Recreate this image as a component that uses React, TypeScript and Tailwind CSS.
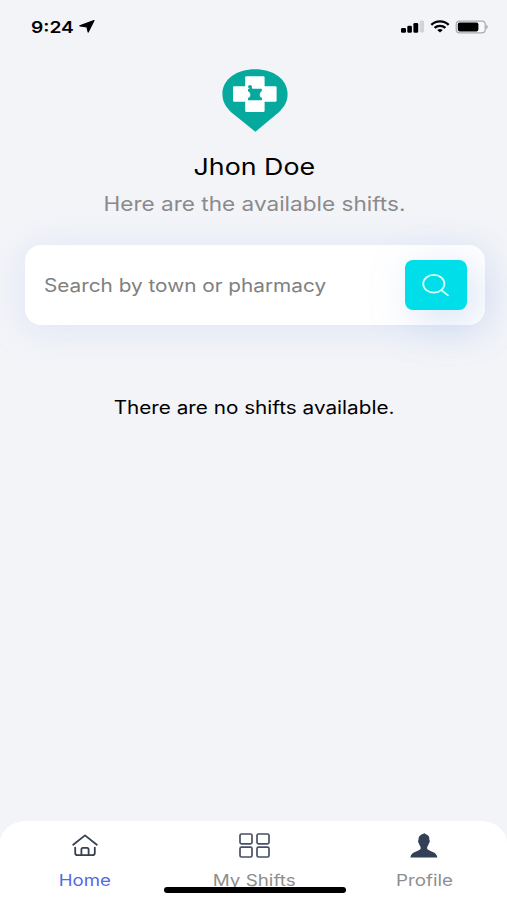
import type { ReactNode } from "react"

interface INavItemProps {
  label: string
  labelClass: string
  children: ReactNode
}

const LocationArrow = () => (
  <svg className="ml-[5px] h-[13px] w-[16px]" viewBox="0 0 16 13">
    <path d="M15 0.6 L9.2 12 L8 7 L0.8 5.8 Z" fill="#000" stroke="#000" strokeWidth="1.2" strokeLinejoin="round" />
  </svg>
)

const StatusBar = () => {
  return (
    <div className="flex h-[53px] items-center justify-between pl-[31px] pr-[18px]">
      <div className="flex items-center">
        <span className="w-[43px] whitespace-nowrap text-[16px] font-semibold leading-none">
          <span className="inline-block origin-left scale-x-[1.2]">9:24</span>
        </span>
        <LocationArrow />
      </div>
      <div className="flex items-center">
        <svg className="h-[13px] w-[23px]" viewBox="0 0 23 13">
          <rect x="0" y="8" width="5" height="4.7" rx="1.3" />
          <rect x="6.3" y="5.8" width="4.6" height="6.9" rx="1.3" />
          <rect x="12.4" y="3" width="4.8" height="9.7" rx="1.3" />
          <rect x="18.8" y="0.6" width="4.2" height="12" rx="1.3" fill="#d3d4d8" />
        </svg>
        <svg className="ml-[6px] h-[13px] w-[20px]" viewBox="0 0 20 13" fill="none" stroke="#000" strokeWidth="2.3">
          <path d="M1.3 4.9 C6 0.3 14 0.3 18.7 4.9" />
          <path d="M4.6 7.9 C7.6 5.1 12.4 5.1 15.4 7.9" />
          <path d="M7.2 9.9 Q10 8 12.8 9.9 L10 12.6 Z" fill="#000" stroke="none" />
        </svg>
        <svg className="ml-[5px] h-[14px] w-[34px]" viewBox="0 0 34 14">
          <rect x="1.2" y="1.1" width="29" height="11.8" rx="3.4" fill="#f7f8fa" stroke="#a9aaad" strokeWidth="1.2" />
          <rect x="2.8" y="2.6" width="20.6" height="8.8" rx="1.8" />
          <path d="M31.4 4.6 Q33.8 7 31.4 9.4 Z" fill="#8d8e91" />
        </svg>
      </div>
    </div>
  )
}

const Logo = () => (
  <svg className="mt-4 h-[63px] w-[66px]" viewBox="0 0 66 63">
    <path
      d="M33 0.3 C51 0.3 65.6 10 65.6 25.2 C65.6 34 60.5 40.5 53.5 46 L33.4 62.8 L12.6 46 C5.6 40.5 0.4 34 0.4 25.2 C0.4 10 15 0.3 33 0.3 Z"
      fill="#06a99d"
    />
    <path
      d="M24.4 7.3 H41.4 Q42.6 7.3 42.6 8.5 V17.3 H53.4 Q54.6 17.3 54.6 18.5 V31.6 Q54.6 32.8 53.4 32.8 H42.6 V41.8 Q42.6 43 41.4 43 H24.4 Q23.2 43 23.2 41.8 V32.8 H12.2 Q11 32.8 11 31.6 V18.5 Q11 17.3 12.2 17.3 H23.2 V8.5 Q23.2 7.3 24.4 7.3 Z"
      fill="#fff"
    />
    <circle cx="28" cy="17.8" r="1.9" fill="#06a99d" />
    <path
      d="M27.2 18.5 L29.4 18 L30.4 19.8 H39.8 V22 Q36.4 24.5 38.4 28 L40 29 V31.2 H26 V29 L27.8 28 Q29.6 24.5 26 22 V20 H27.8 Z"
      fill="#06a99d"
    />
  </svg>
)

const SearchBar = () => {
  return (
    <div className="mt-[27px] flex h-[80px] w-[460px] items-center justify-between rounded-2xl bg-white pl-[19px] pr-[18px] shadow-[0_4px_36px_rgba(165,190,240,0.28)]">
      <span className="origin-left scale-x-[1.153] whitespace-nowrap text-[18px] text-[#808080]">
        Search by town or pharmacy
      </span>
      <button
        type="button"
        className="flex h-[50px] w-[62px] items-center justify-center rounded-[8px] bg-[#00dfe9] shadow-[10px_10px_44px_rgba(130,165,225,0.34)]"
      >
        <svg className="h-[23px] w-[28px]" viewBox="0 0 28 23" fill="none" stroke="#d8fbfc" strokeWidth="1.8">
          <ellipse cx="11.8" cy="9.8" rx="10.6" ry="8.9" />
          <path d="M19.2 16 L26 21.4" strokeLinecap="round" />
        </svg>
      </button>
    </div>
  )
}

const NavItem = ({ label, labelClass, children }: INavItemProps) => {
  return (
    <div className="flex flex-1 flex-col items-center pt-[10px]">
      <div className="flex h-7 items-center">{children}</div>
      <span className={`mt-[12px] whitespace-nowrap text-[15.5px] leading-5 ${labelClass}`}>{label}</span>
    </div>
  )
}

const BottomNav = () => {
  return (
    <div className="relative flex h-[79px] overflow-hidden rounded-t-[26px_22px] bg-white">
      <div className="flex w-[509px] shrink-0">
        <NavItem label="Home" labelClass="scale-x-[1.2] text-[#5468e8]">
          <svg className="h-[23px] w-[26px]" viewBox="0 0 26 23" fill="none" stroke="#36404f" strokeWidth="1.8" strokeLinecap="round" strokeLinejoin="round">
            <path d="M1.2 10.8 L13 1.4 L24.8 10.8" />
            <path d="M3.2 13.6 V19 Q3.2 21.2 5.5 21.2 H20.5 Q22.8 21.2 22.8 19 V13.6" />
            <path d="M9.4 21 V15.6 Q9.4 13.9 11 13.9 H15 Q16.6 13.9 16.6 15.6 V21" />
          </svg>
        </NavItem>
        <NavItem label="My Shifts" labelClass="scale-x-[1.215] text-[#8e8e8e]">
          <svg className="h-[25px] w-[31px]" viewBox="0 0 31 25" fill="none" stroke="#465064" strokeWidth="1.7">
            <rect x="1" y="1" width="12" height="9.8" rx="1.5" />
            <rect x="18" y="1" width="12" height="9.8" rx="1.5" />
            <rect x="1" y="14.2" width="12" height="9.8" rx="1.5" />
            <rect x="18" y="14.2" width="12" height="9.8" rx="1.5" />
          </svg>
        </NavItem>
        <NavItem label="Profile" labelClass="scale-x-[1.21] text-[#8e8e8e]">
          <svg className="h-[25px] w-[28px]" viewBox="0 0 28 25" fill="#323f55">
            <path d="M14.8 0.3 L15.8 1.3 C18.5 1.8 19.7 4 19.3 7 C20.2 7.4 19.8 9.8 18.8 10.4 C18.4 12 17.8 13 17.2 13.8 V16 C19 18.5 26.9 18.5 27.4 24.6 H0.4 C0.9 18.5 8.8 18.5 10.6 16 V13.8 C10 13 9.4 12 9 10.4 C8 9.8 7.7 7.4 8.6 7 C8.2 3.5 10.5 1.5 14.8 0.3 Z" />
          </svg>
        </NavItem>
      </div>
      {/* home indicator */}
      <div className="absolute bottom-[7px] left-[164px] h-[6px] w-[182px] rounded-full bg-black" />
    </div>
  )
}

const App = () => {
  return (
    <div className="flex h-[900px] w-[507px] flex-col overflow-hidden bg-[#f3f4f8] font-['Inter',sans-serif] text-black">
      <StatusBar />
      <main className="flex flex-1 flex-col items-center pl-[2px]">
        <Logo />
        <h1 className="mt-[20px] scale-x-[1.14] whitespace-nowrap text-[23.5px] leading-[30px]">Jhon Doe</h1>
        <p className="mt-[8px] scale-x-[1.157] whitespace-nowrap text-[19.5px] leading-7 text-[#8a8a8c]">
          Here are the available shifts.
        </p>
        <SearchBar />
        <p className="mt-[69px] scale-x-[1.15] whitespace-nowrap text-[18px] leading-7">
          There are no shifts available.
        </p>
      </main>
      <BottomNav />
    </div>
  )
}

export default App
